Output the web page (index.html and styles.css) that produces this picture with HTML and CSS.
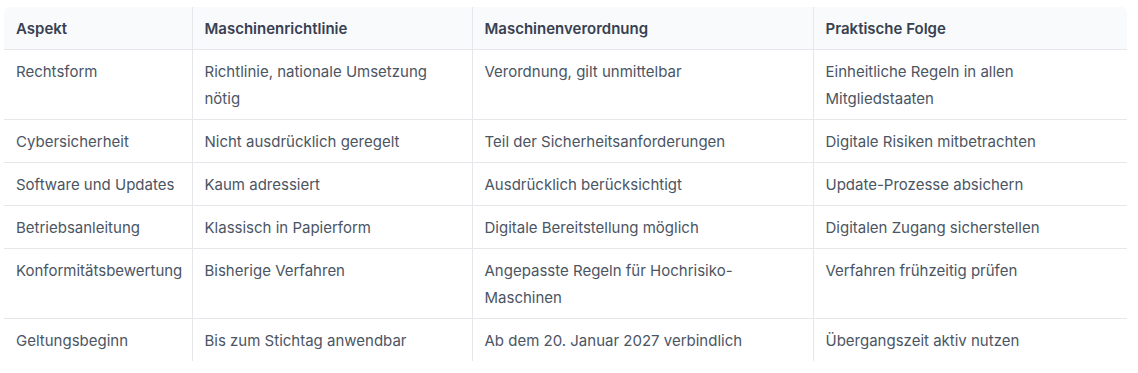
FILE: index.html
```html
<!DOCTYPE html>
<html lang="de">
<head>
<meta charset="utf-8">
<title>Maschinenrichtlinie vs. Maschinenverordnung</title>
<link rel="stylesheet" href="styles.css">
</head>
<body>
<div class="table-wrap">
  <table class="cmp">
    <colgroup>
      <col class="c1"><col class="c2"><col class="c3"><col class="c4">
    </colgroup>
    <thead>
      <tr><th>Aspekt</th><th>Maschinenrichtlinie</th><th>Maschinenverordnung</th><th>Praktische Folge</th></tr>
    </thead>
    <tbody>
      <tr><td>Rechtsform</td><td>Richtlinie, nationale Umsetzung nötig</td><td>Verordnung, gilt unmittelbar</td><td>Einheitliche Regeln in allen Mitgliedstaaten</td></tr>
      <tr><td>Cybersicherheit</td><td>Nicht ausdrücklich geregelt</td><td>Teil der Sicherheitsanforderungen</td><td>Digitale Risiken mitbetrachten</td></tr>
      <tr><td>Software und Updates</td><td>Kaum adressiert</td><td>Ausdrücklich berücksichtigt</td><td>Update-Prozesse absichern</td></tr>
      <tr><td>Betriebsanleitung</td><td>Klassisch in Papierform</td><td>Digitale Bereitstellung möglich</td><td>Digitalen Zugang sicherstellen</td></tr>
      <tr><td>Konformitätsbewertung</td><td>Bisherige Verfahren</td><td>Angepasste Regeln für Hochrisiko-Maschinen</td><td>Verfahren frühzeitig prüfen</td></tr>
      <tr><td>Geltungsbeginn</td><td>Bis zum Stichtag anwendbar</td><td>Ab dem 20. Januar 2027 verbindlich</td><td>Übergangszeit aktiv nutzen</td></tr>
    </tbody>
  </table>
</div>
</body>
</html>
```

FILE: styles.css
```css
html, body {
  margin: 0;
  padding: 0;
  background: #ffffff;
}

body {
  font-family: Inter, "Noto Sans", "Liberation Sans", sans-serif;
  font-size: 15px;
  color: #4b5563;
}

.table-wrap {
  margin: 7px 0 0 4px;
  width: 1123px;
  border-radius: 6px;
  overflow: hidden;
}

.cmp {
  width: 100%;
  border-collapse: collapse;
  table-layout: fixed;
}

.c1 { width: 188px; }
.c2 { width: 280px; }
.c3 { width: 341px; }
.c4 { width: 314px; }

.cmp th,
.cmp td {
  text-align: left;
  vertical-align: top;
  padding: 7.5px 12px;
  line-height: 27px;
  border-left: 1px solid #e5e7eb;
}

.cmp th:first-child,
.cmp td:first-child {
  border-left: none;
}

.cmp thead th {
  background: #f9fafb;
  color: #374151;
  font-weight: 600;
  border-bottom: 1px solid #e5e7eb;
}

.cmp tbody tr + tr td {
  border-top: 1px solid #e5e7eb;
}
```
